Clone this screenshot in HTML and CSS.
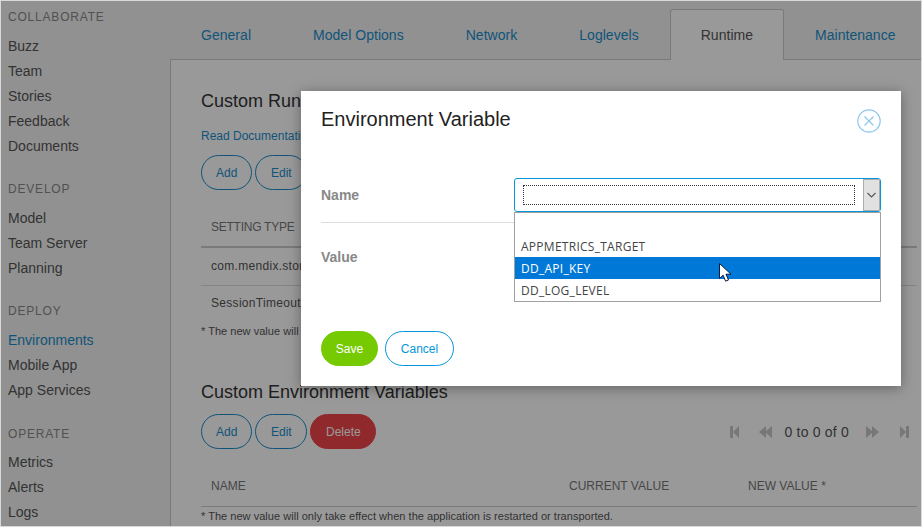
FILE: index.html
```html
<!DOCTYPE html>
<html lang="en">
<head>
    <meta charset="UTF-8">
    <title>Environment Variable</title>
    <link rel="stylesheet" href="styles.css">
</head>
<body>
    <div class="window">
        <div class="app">
            <nav class="sidebar">
                <div class="nav-group">
                    <div class="nav-title">COLLABORATE</div>
                    <a class="nav-item">Buzz</a>
                    <a class="nav-item">Team</a>
                    <a class="nav-item">Stories</a>
                    <a class="nav-item">Feedback</a>
                    <a class="nav-item">Documents</a>
                </div>
                <div class="nav-group">
                    <div class="nav-title">DEVELOP</div>
                    <a class="nav-item">Model</a>
                    <a class="nav-item">Team Server</a>
                    <a class="nav-item">Planning</a>
                </div>
                <div class="nav-group">
                    <div class="nav-title">DEPLOY</div>
                    <a class="nav-item active">Environments</a>
                    <a class="nav-item">Mobile App</a>
                    <a class="nav-item">App Services</a>
                </div>
                <div class="nav-group">
                    <div class="nav-title">OPERATE</div>
                    <a class="nav-item">Metrics</a>
                    <a class="nav-item">Alerts</a>
                    <a class="nav-item">Logs</a>
                </div>
            </nav>
            <main class="main">
                <div class="tabs">
                    <a class="tab">General</a>
                    <a class="tab">Model Options</a>
                    <a class="tab">Network</a>
                    <a class="tab">Loglevels</a>
                    <a class="tab tab-active">Runtime</a>
                    <a class="tab">Maintenance</a>
                </div>
                <div class="panel">
                    <h2 class="section-title">Custom Runtime Settings</h2>
                    <a class="doc-link">Read Documentation</a>
                    <div class="toolbar">
                        <button class="btn btn-outline">Add</button>
                        <button class="btn btn-outline btn-edit">Edit</button>
                    </div>
                    <table class="grid grid-runtime">
                        <thead>
                            <tr><th>SETTING TYPE</th><th>CURRENT VALUE</th><th>NEW VALUE *</th></tr>
                        </thead>
                        <tbody>
                            <tr><td>com.mendix.storage</td><td></td><td></td></tr>
                            <tr><td>SessionTimeout</td><td></td><td></td></tr>
                        </tbody>
                    </table>
                    <p class="note note-runtime">* The new value will only take effect when the application is restarted or transported.</p>
                    <h2 class="section-title section-env">Custom Environment Variables</h2>
                    <div class="toolbar toolbar-env">
                        <button class="btn btn-outline">Add</button>
                        <button class="btn btn-outline btn-edit">Edit</button>
                        <button class="btn btn-danger">Delete</button>
                        <div class="pager">
                            <svg class="pager-icon" width="9" height="12" viewBox="0 0 9 12"><path d="M0 0h3v12H0zM9 0v12L3 6z"/></svg>
                            <svg class="pager-icon pager-prev" width="13" height="12" viewBox="0 0 13 12"><path d="M7 0v12L0 6zM13 0v12L6 6z"/></svg>
                            <span class="pager-text">0 to 0 of 0</span>
                            <svg class="pager-icon pager-next" width="13" height="12" viewBox="0 0 13 12"><path d="M0 0v12l7-6zM6 0v12l7-6z"/></svg>
                            <svg class="pager-icon pager-last" width="9" height="12" viewBox="0 0 9 12"><path d="M0 0v12l6-6zM6 0h3v12H6z"/></svg>
                        </div>
                    </div>
                    <table class="grid grid-env">
                        <thead>
                            <tr><th>NAME</th><th>CURRENT VALUE</th><th>NEW VALUE *</th></tr>
                        </thead>
                    </table>
                    <p class="note note-env">* The new value will only take effect when the application is restarted or transported.</p>
                </div>
            </main>
        </div>
        <div class="overlay"></div>
        <div class="modal">
            <div class="modal-head">
                <h1 class="modal-title">Environment Variable</h1>
                <svg class="modal-close" width="24" height="24" viewBox="0 0 24 24" fill="none" stroke="#8ec8f0" stroke-width="1.2">
                    <circle cx="12" cy="12" r="11.2"/>
                    <path d="M7.5 7.5l9 9M16.5 7.5l-9 9"/>
                </svg>
            </div>
            <div class="form-row form-row-name">
                <label class="form-label">Name</label>
                <div class="combo-wrap">
                    <div class="combo">
                        <div class="combo-focus"></div>
                        <div class="combo-arrow">
                            <svg width="9" height="6" viewBox="0 0 9 6" fill="none" stroke="#555" stroke-width="1.1"><path d="M.5 1l4 4 4-4"/></svg>
                        </div>
                    </div>
                    <ul class="combo-list">
                        <li class="combo-option"></li>
                        <li class="combo-option">APPMETRICS_TARGET</li>
                        <li class="combo-option selected">DD_API_KEY</li>
                        <li class="combo-option">DD_LOG_LEVEL</li>
                    </ul>
                </div>
            </div>
            <div class="form-row form-row-value">
                <label class="form-label">Value</label>
            </div>
            <div class="modal-foot">
                <button class="btn btn-save">Save</button>
                <button class="btn btn-cancel">Cancel</button>
            </div>
        </div>
        <svg class="cursor" width="13" height="20" viewBox="0 0 13 20">
            <path d="M.5.5v15l3.6-3.3 2.5 6 2.9-1.2-2.5-5.8h5z" fill="#fff" stroke="#0a1a3a"/>
        </svg>
    </div>
</body>
</html>
```

FILE: styles.css
```css
* {
    box-sizing: border-box;
}
html, body {
    margin: 0;
    padding: 0;
}
body {
    font-family: "Liberation Sans", Arial, sans-serif;
    font-size: 14px;
    color: #333;
}
button {
    font-family: inherit;
}
.window {
    position: relative;
    width: 922px;
    height: 527px;
    border: 1px solid #d9d9d9;
    overflow: hidden;
    background: #f2f2f2;
}
.app {
    display: flex;
    height: 100%;
}
.sidebar {
    width: 169px;
    flex-shrink: 0;
    padding: 8px 0 0 7px;
    color: #444;
}
.nav-group {
    margin-bottom: 22px;
}
.nav-group:nth-child(3) {
    margin-bottom: 23px;
}
.nav-title {
    font-size: 12px;
    line-height: 16px;
    letter-spacing: 0.8px;
    color: #888;
    margin-bottom: 9px;
}
.nav-group:last-child .nav-title {
    margin-bottom: 8px;
}
.nav-item {
    display: block;
    line-height: 25px;
    color: #555;
}
.nav-item.active {
    color: #1b8dcb;
}
.main {
    flex: 1;
    display: flex;
    flex-direction: column;
    min-width: 0;
}
.tabs {
    display: flex;
    padding-top: 8px;
    height: 58px;
}
.tab {
    flex-shrink: 0;
    height: 51px;
    padding: 0 30px;
    line-height: 50px;
    letter-spacing: 0.03px;
    white-space: nowrap;
    color: #1b8dcb;
    border: 1px solid transparent;
    border-bottom: 0;
    position: relative;
}
.tab-active {
    color: #555;
    background: #fff;
    border-color: #ccc;
    border-radius: 3px 3px 0 0;
}
.panel {
    flex: 1;
    background: #fff;
    border-top: 1px solid #ccc;
    border-left: 1px solid #ccc;
    padding: 29px 4px 0 30px;
}
.section-title {
    font-size: 18px;
    font-weight: normal;
    line-height: 24px;
    margin: 0;
    color: #333;
}
.doc-link {
    display: block;
    font-size: 12px;
    line-height: 16px;
    margin-top: 15px;
    color: #1b8dcb;
}
.toolbar {
    display: flex;
    gap: 3px;
    margin-top: 11px;
}
.btn {
    height: 35px;
    padding: 0 14px;
    border-radius: 18px;
    border: 1px solid #1b8dcb;
    font-size: 12px;
    background: #fff;
    color: #1b8dcb;
}
.btn-edit {
    min-width: 52px;
}
.btn-danger {
    min-width: 66px;
    background: #ee4549;
    border-color: #ee4549;
    color: #fff;
}
.pager {
    margin-left: auto;
    display: flex;
    align-items: center;
    padding-right: 8px;
    color: #555;
}
.pager-icon {
    fill: #c6c6c6;
}
.pager-prev {
    margin-left: 20px;
}
.pager-text {
    margin: 0 17px 0 13px;
    letter-spacing: 0.2px;
}
.pager-last {
    margin-left: 21px;
}
.grid {
    width: 100%;
    table-layout: fixed;
    border-collapse: collapse;
    font-size: 12px;
    margin-top: 18px;
}
.grid th {
    height: 39px;
    padding: 0 10px;
    text-align: left;
    font-weight: normal;
    color: #777;
    border-bottom: 2px solid #ccc;
}
.grid-runtime th:first-child {
    letter-spacing: -0.25px;
}
.grid th:first-child {
    width: 358px;
}
.grid th:nth-child(2) {
    width: 179px;
}
.grid td {
    height: 38px;
    padding: 0 10px;
    color: #555;
    letter-spacing: 0.3px;
    border-bottom: 1px solid #ddd;
}
.grid tbody tr:last-child td {
    height: 36px;
    border-bottom: 0;
}
.grid-env th {
    border-bottom-width: 1px;
}
.note {
    font-size: 11px;
    line-height: 14px;
    margin: 0;
    color: #555;
    letter-spacing: 0.03px;
}
.note-runtime {
    margin-top: 3px;
}
.note-env {
    margin-top: 2px;
}
.section-env {
    margin-top: 42px;
}
.toolbar-env {
    margin-top: 10px;
}
.grid-env {
    margin-top: 18px;
}
.overlay {
    position: absolute;
    inset: 0;
    background: rgba(0, 0, 0, 0.4);
}
.modal {
    position: absolute;
    left: 300px;
    top: 90px;
    width: 600px;
    height: 295px;
    padding: 14px 20px 0;
    background: #fff;
    box-shadow: 0 2px 12px rgba(0, 0, 0, 0.35);
}
.modal-head {
    display: flex;
    justify-content: space-between;
    align-items: flex-start;
    height: 28px;
}
.modal-title {
    margin: 0;
    font-size: 20px;
    font-weight: normal;
    line-height: 28px;
    color: #222;
}
.modal-close {
    margin: 4px 0 0;
}
.form-row {
    display: flex;
}
.form-row-name {
    margin-top: 45px;
    height: 45px;
    border-bottom: 1px solid #ddd;
}
.form-row-value {
    padding-top: 24px;
}
.form-label {
    width: 193px;
    font-weight: bold;
    line-height: 34px;
    color: #888;
}
.form-row-value .form-label {
    line-height: 20px;
}
.combo-wrap {
    position: relative;
    flex: 1;
}
.combo {
    display: flex;
    justify-content: space-between;
    height: 34px;
    padding: 6px 0 0 8px;
    border: 1px solid #0595db;
    border-radius: 3px;
    background: #fff;
}
.combo-focus {
    width: 332px;
    height: 20px;
    border: 1px dotted #333;
}
.combo-arrow {
    display: flex;
    align-items: center;
    justify-content: center;
    width: 17px;
    height: 32px;
    margin-top: -6px;
    background: #e1e1e1;
    border: 1px solid #adadad;
}
.combo-list {
    position: absolute;
    left: 0;
    right: 0;
    top: 34px;
    margin: 0;
    padding: 0;
    list-style: none;
    background: #fff;
    border: 1px solid #a0a0a0;
    font-family: "Open Sans", "Noto Sans", sans-serif;
    font-size: 12px;
    letter-spacing: 0.27px;
    color: #444;
}
.combo-option {
    height: 22px;
    line-height: 23px;
    padding-left: 6px;
}
.combo-option.selected {
    background: #0078d7;
    color: #fff;
}
.modal-foot {
    display: flex;
    gap: 7px;
    margin-top: 64px;
}
.btn-save {
    background: #76ca02;
    border-color: #76ca02;
    color: #fff;
    min-width: 57px;
    padding: 0;
}
.btn-cancel {
    color: #0595db;
    border-color: #0595db;
    min-width: 69px;
    padding: 0;
}
.cursor {
    position: absolute;
    left: 718px;
    top: 262px;
}
```
